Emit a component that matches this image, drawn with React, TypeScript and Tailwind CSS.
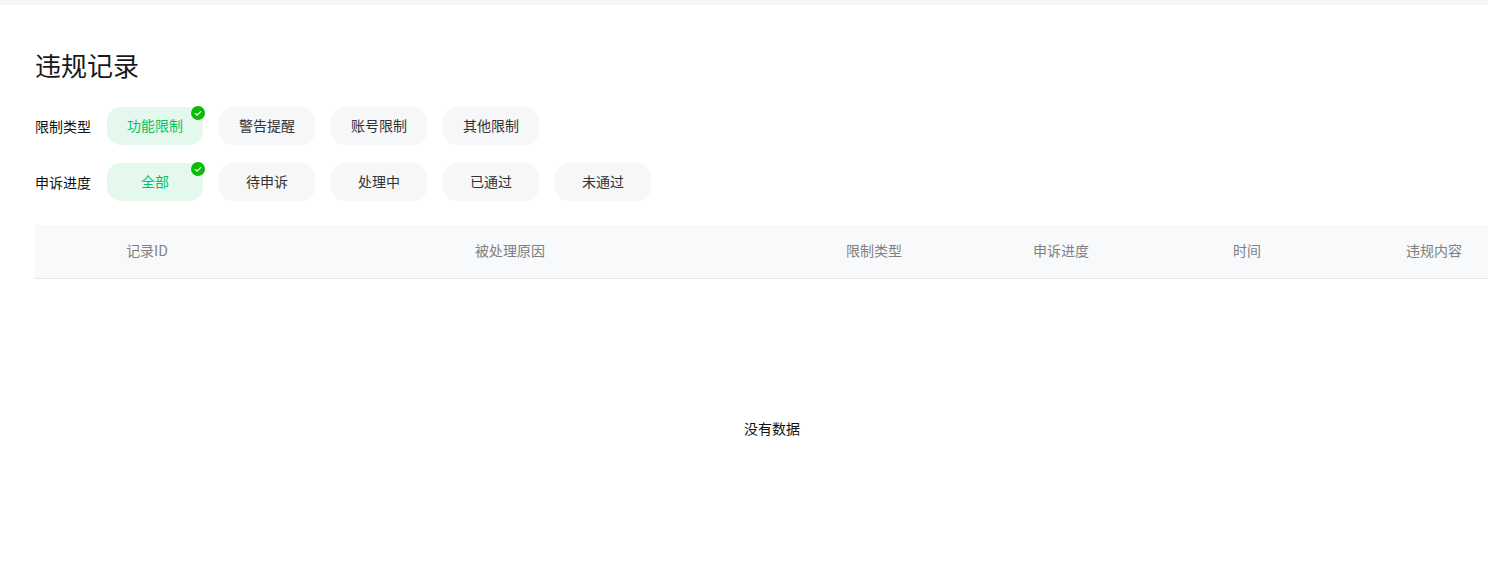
const typeOptions = ["功能限制", "警告提醒", "账号限制", "其他限制"];
const progressOptions = ["全部", "待申诉", "处理中", "已通过", "未通过"];

const columns = ["记录ID", "被处理原因", "限制类型", "申诉进度", "时间", "违规内容"];

const Chip = ({ label, active }: { label: string; active?: boolean }) => (
  <div
    className={
      active
        ? "relative flex h-[38px] w-24 items-center justify-center rounded-[14px] bg-[#e5f8ee] pb-[2px] text-sm text-[#07c160]"
        : "relative flex h-[38px] w-24 items-center justify-center rounded-[14px] bg-[#f6f7f9] pb-[2px] text-sm text-[#333]"
    }
  >
    {label}
    {active && (
      <span className="absolute -right-[2px] -top-[1px] flex h-[14px] w-[14px] items-center justify-center rounded-full bg-[#09bb07]">
        <svg viewBox="0 0 14 14" className="h-[14px] w-[14px]" fill="none">
          <path d="M4 7.2 6.1 9.2 10 5.2" stroke="#e6f8e6" strokeWidth="1.3" />
        </svg>
      </span>
    )}
  </div>
);

const FilterRow = ({ label, options }: { label: string; options: string[] }) => (
  <div className="flex items-center">
    <span className="w-[72px] text-sm text-[#111]">{label}</span>
    <div className="flex gap-4">
      {options.map((option, i) => (
        <Chip key={option} label={option} active={i === 0} />
      ))}
    </div>
  </div>
);

export default function App() {
  return (
    <div
      className="h-[574px] w-[1488px] overflow-hidden bg-white"
      style={{ fontFamily: '"Noto Sans CJK SC", "Liberation Sans", sans-serif' }}
    >
      <div className="h-[5px] bg-[#f5f6f7]" />
      <div className="w-[1509px] pl-[35px]">
        <h1 className="mt-[41px] h-[38px] text-[26px] leading-[38px] font-normal text-[#191919]">违规记录</h1>
        <div className="mt-[23px] flex flex-col gap-[18px]">
          <FilterRow label="限制类型" options={typeOptions} />
          <FilterRow label="申诉进度" options={progressOptions} />
        </div>
        <div className="mt-6 grid h-[54px] grid-cols-[224px_502px_226px_148px_224px_150px] items-center border-b border-[#e5e5e5] bg-[#f8f9fb] pb-[4px] text-center text-sm text-[#808080]">
          {columns.map((col) => (
            <div key={col}>{col}</div>
          ))}
        </div>
        <div className="mt-[140px] text-center text-sm leading-[18px] text-[#111]">没有数据</div>
      </div>
    </div>
  );
}
